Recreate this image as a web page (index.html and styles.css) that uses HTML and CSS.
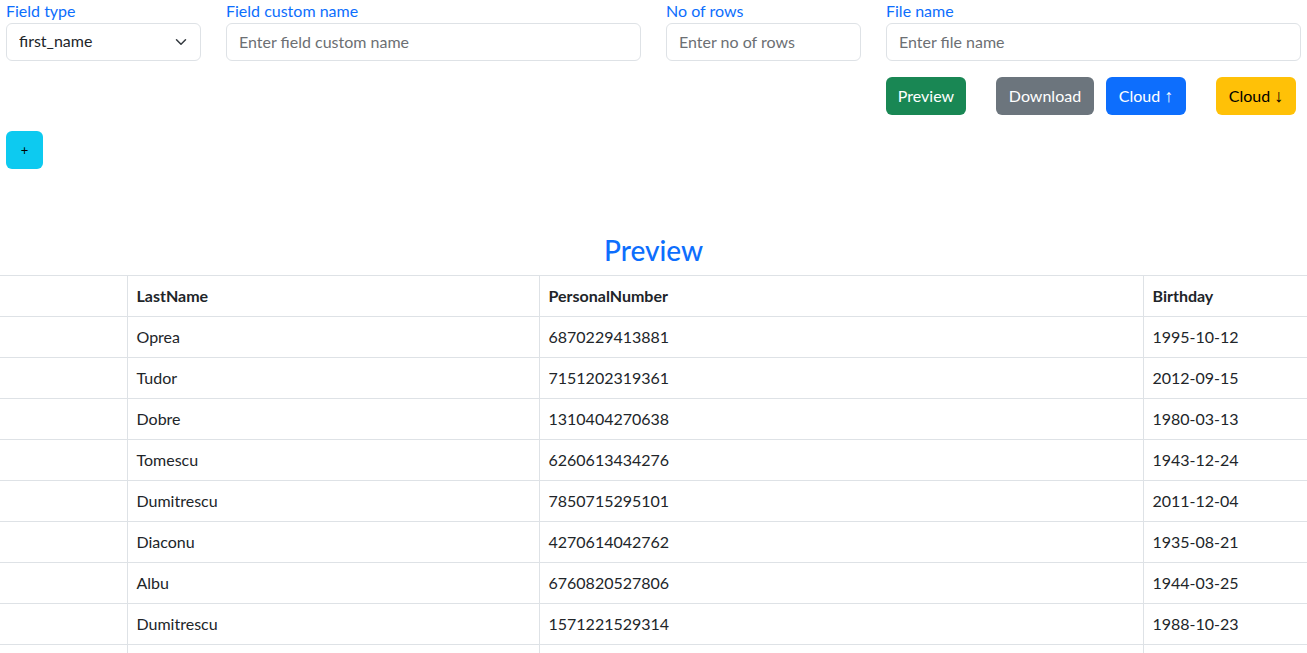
FILE: index.html
```html
<!DOCTYPE html>
<html lang="en">
<head>
<meta charset="utf-8">
<title>Data generator</title>
<link rel="stylesheet" href="styles.css">
</head>
<body>
<div class="form-row">
  <div class="field">
    <label class="field-label">Field type</label>
    <div class="select-wrap">
      <select class="control select">
        <option>first_name</option>
      </select>
      <svg class="chevron" width="16" height="12" viewBox="0 0 16 16"><path d="m2 5 6 6 6-6" fill="none" stroke="#343a40" stroke-width="2" stroke-linecap="round" stroke-linejoin="round"/></svg>
    </div>
  </div>
  <div class="field">
    <label class="field-label">Field custom name</label>
    <input class="control" type="text" placeholder="Enter field custom name">
  </div>
  <div class="field">
    <label class="field-label">No of rows</label>
    <input class="control" type="text" placeholder="Enter no of rows">
  </div>
  <div class="field">
    <label class="field-label">File name</label>
    <input class="control" type="text" placeholder="Enter file name">
    <div class="actions">
      <button class="btn btn-green">Preview</button>
      <button class="btn btn-gray">Download</button>
      <button class="btn btn-blue">Cloud <span class="arrow">↑</span></button>
      <button class="btn btn-yellow">Cloud <span class="arrow">↓</span></button>
    </div>
  </div>
</div>
<div class="add-row">
  <button class="btn btn-cyan">+</button>
</div>
<h2 class="preview-title">Preview</h2>
<div class="table-wrap">
  <table class="data-table">
    <colgroup>
      <col class="c1"><col class="c2"><col class="c3"><col class="c4">
    </colgroup>
    <thead>
      <tr><th></th><th>LastName</th><th>PersonalNumber</th><th>Birthday</th></tr>
    </thead>
    <tbody>
      <tr><td></td><td>Oprea</td><td>6870229413881</td><td>1995-10-12</td></tr>
      <tr><td></td><td>Tudor</td><td>7151202319361</td><td>2012-09-15</td></tr>
      <tr><td></td><td>Dobre</td><td>1310404270638</td><td>1980-03-13</td></tr>
      <tr><td></td><td>Tomescu</td><td>6260613434276</td><td>1943-12-24</td></tr>
      <tr><td></td><td>Dumitrescu</td><td>7850715295101</td><td>2011-12-04</td></tr>
      <tr><td></td><td>Diaconu</td><td>4270614042762</td><td>1935-08-21</td></tr>
      <tr><td></td><td>Albu</td><td>6760820527806</td><td>1944-03-25</td></tr>
      <tr><td></td><td>Dumitrescu</td><td>1571221529314</td><td>1988-10-23</td></tr>
      <tr class="empty-row"><td></td><td></td><td></td><td></td></tr>
    </tbody>
  </table>
</div>
</body>
</html>
```
FILE: styles.css
```css
* { box-sizing: border-box; }

html, body {
  margin: 0;
  padding: 0;
  overflow: hidden;
}

body {
  font-family: Lato, "Liberation Sans", sans-serif;
  font-size: 16px;
  line-height: 1.5;
  color: #212529;
  background: #fff;
}

.form-row {
  display: grid;
  grid-template-columns: 195px 415px 195px 415px;
  column-gap: 25px;
  padding-left: 6px;
}

.field-label {
  display: block;
  color: #0d6efd;
  font-size: 16px;
  line-height: 22px;
  margin-bottom: 1px;
}

.control {
  display: block;
  width: 100%;
  height: 38px;
  padding: 5px 12px 7px;
  font-family: inherit;
  font-size: 16px;
  line-height: 24px;
  color: #212529;
  background: #fff;
  border: 1px solid #dee2e6;
  border-radius: 6px;
  outline: none;
}

.control::placeholder {
  color: #6c6f73;
}

.select-wrap {
  position: relative;
}

.select {
  appearance: none;
  -webkit-appearance: none;
  padding-right: 36px;
}

.chevron {
  position: absolute;
  right: 12px;
  top: 13px;
  pointer-events: none;
}

.actions {
  display: flex;
  margin-top: 16px;
}

.btn {
  height: 38px;
  padding: 6px 0;
  font-family: inherit;
  font-size: 16px;
  line-height: 24px;
  border: 1px solid transparent;
  border-radius: 6px;
  color: #fff;
  cursor: pointer;
  white-space: nowrap;
  text-align: center;
}

.arrow {
  font-family: "Liberation Sans", "DejaVu Sans", sans-serif;
  font-size: 18px;
  line-height: 20px;
}

.btn-green { background: #198754; width: 80px; }
.btn-gray { background: #6c757d; width: 98px; margin-left: 30px; }
.btn-blue { background: #0d6efd; width: 80px; margin-left: 12px; }
.btn-yellow { background: #ffc107; color: #000; width: 80px; margin-left: 30px; }

.add-row {
  padding-left: 6px;
  margin-top: 16px;
}

.btn-cyan {
  background: #0dcaf0;
  color: #000;
  width: 37px;
  font-size: 13px;
  padding: 0;
}

.preview-title {
  margin: 62px 0 6px;
  text-align: center;
  color: #0d6efd;
  font-size: 28px;
  font-weight: 500;
  line-height: 38px;
}

.table-wrap {
  overflow: hidden;
}

.data-table {
  width: 1307px;
  table-layout: fixed;
  border-collapse: collapse;
}

.c1 { width: 127px; }
.c2 { width: 412px; }
.c3 { width: 604px; }
.c4 { width: 164px; }

.data-table th,
.data-table td {
  border: 1px solid #dee2e6;
  padding: 8px 8px 8px 9px;
  text-align: left;
  line-height: 24px;
  height: 41px;
  font-size: 16px;
  white-space: nowrap;
}

.data-table th {
  font-weight: 700;
}

.data-table th:first-child,
.data-table td:first-child {
  border-left: none;
}

.data-table th:last-child,
.data-table td:last-child {
  border-right: none;
}
```
